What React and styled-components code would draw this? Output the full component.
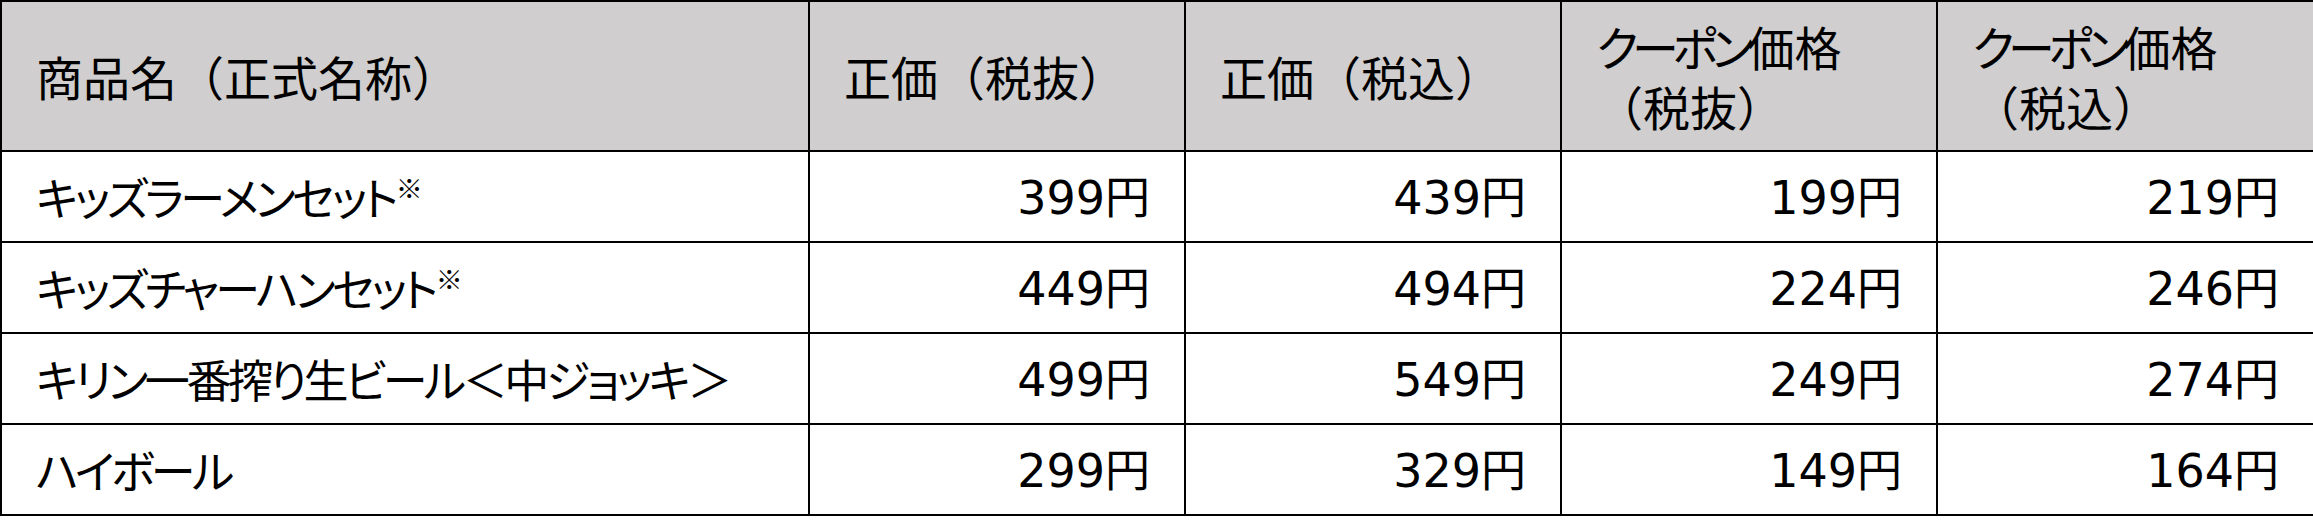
import React from "react";
import styled, { createGlobalStyle } from "styled-components";

const GlobalStyle = createGlobalStyle`
  html, body { margin: 0; padding: 0; background: #ffffff; }
  body { font-family: "Noto Sans CJK JP", sans-serif; color: #000; }
`;

const Table = styled.table`
  border-collapse: collapse;
  table-layout: fixed;
  width: 2313px;
  font-family: "Noto Sans CJK JP", sans-serif;
  color: #000;
  font-feature-settings: "palt";
`;

const HeadCell = styled.th`
  height: 148px;
  padding: 0 0 0 34px;
  background: #d0cece;
  border: 2px solid #000;
  text-align: left;
  vertical-align: middle;
  font-weight: 400;
  font-size: 47px;
  line-height: 60px;
  white-space: nowrap;
`;

const Paren = styled.span`
  font-feature-settings: normal;
`;

const Kana = styled.span`
  letter-spacing: -6px;
`;

const Row = styled.tr`
  height: 91px;
`;

const NameCell = styled.td`
  padding: 0 0 0 34px;
  border: 2px solid #000;
  vertical-align: middle;
  font-size: 45px;
  line-height: 1;
  letter-spacing: -3.4px;
  white-space: nowrap;
`;

const PriceCell = styled.td`
  padding: 0 34px 0 0;
  border: 2px solid #000;
  text-align: right;
  vertical-align: middle;
  font-size: 45px;
  line-height: 1;
  white-space: nowrap;
`;

const Digits = styled.span`
  font-family: "DejaVu Sans", "Noto Sans CJK JP", sans-serif;
  font-size: 46px;
`;

const Mark = styled.span`
  font-family: "Noto Sans CJK JP", sans-serif;
  font-size: 27px;
  letter-spacing: 0;
  vertical-align: 17px;
  margin-left: 1px;
`;

const columns = [808, 376, 376, 376, 377];

const rows = [
  { name: "キッズラーメンセット", mark: true, prices: ["399", "439", "199", "219"] },
  { name: "キッズチャーハンセット", mark: true, prices: ["449", "494", "224", "246"] },
  { name: "キリン一番搾り生ビール＜中ジョッキ＞", mark: false, prices: ["499", "549", "249", "274"] },
  { name: "ハイボール", mark: false, prices: ["299", "329", "149", "164"] },
];

const P = ({ children }) => <Paren>{children}</Paren>;

export default function App() {
  return (
    <>
      <GlobalStyle />
      <Table>
        <colgroup>
          {columns.map((w, i) => (
            <col key={i} style={{ width: w }} />
          ))}
        </colgroup>
        <thead>
          <tr>
            <HeadCell>
              商品名<P>（</P>正式名称<P>）</P>
            </HeadCell>
            <HeadCell>
              正価<P>（</P>税抜<P>）</P>
            </HeadCell>
            <HeadCell>
              正価<P>（</P>税込<P>）</P>
            </HeadCell>
            <HeadCell>
              <Kana>クーポン</Kana>価格
              <br />
              <P>（</P>税抜<P>）</P>
            </HeadCell>
            <HeadCell>
              <Kana>クーポン</Kana>価格
              <br />
              <P>（</P>税込<P>）</P>
            </HeadCell>
          </tr>
        </thead>
        <tbody>
          {rows.map((r) => (
            <Row key={r.name}>
              <NameCell>
                {r.name}
                {r.mark && <Mark>※</Mark>}
              </NameCell>
              {r.prices.map((p, i) => (
                <PriceCell key={i}>
                  <Digits>{p}</Digits>円
                </PriceCell>
              ))}
            </Row>
          ))}
        </tbody>
      </Table>
    </>
  );
}
